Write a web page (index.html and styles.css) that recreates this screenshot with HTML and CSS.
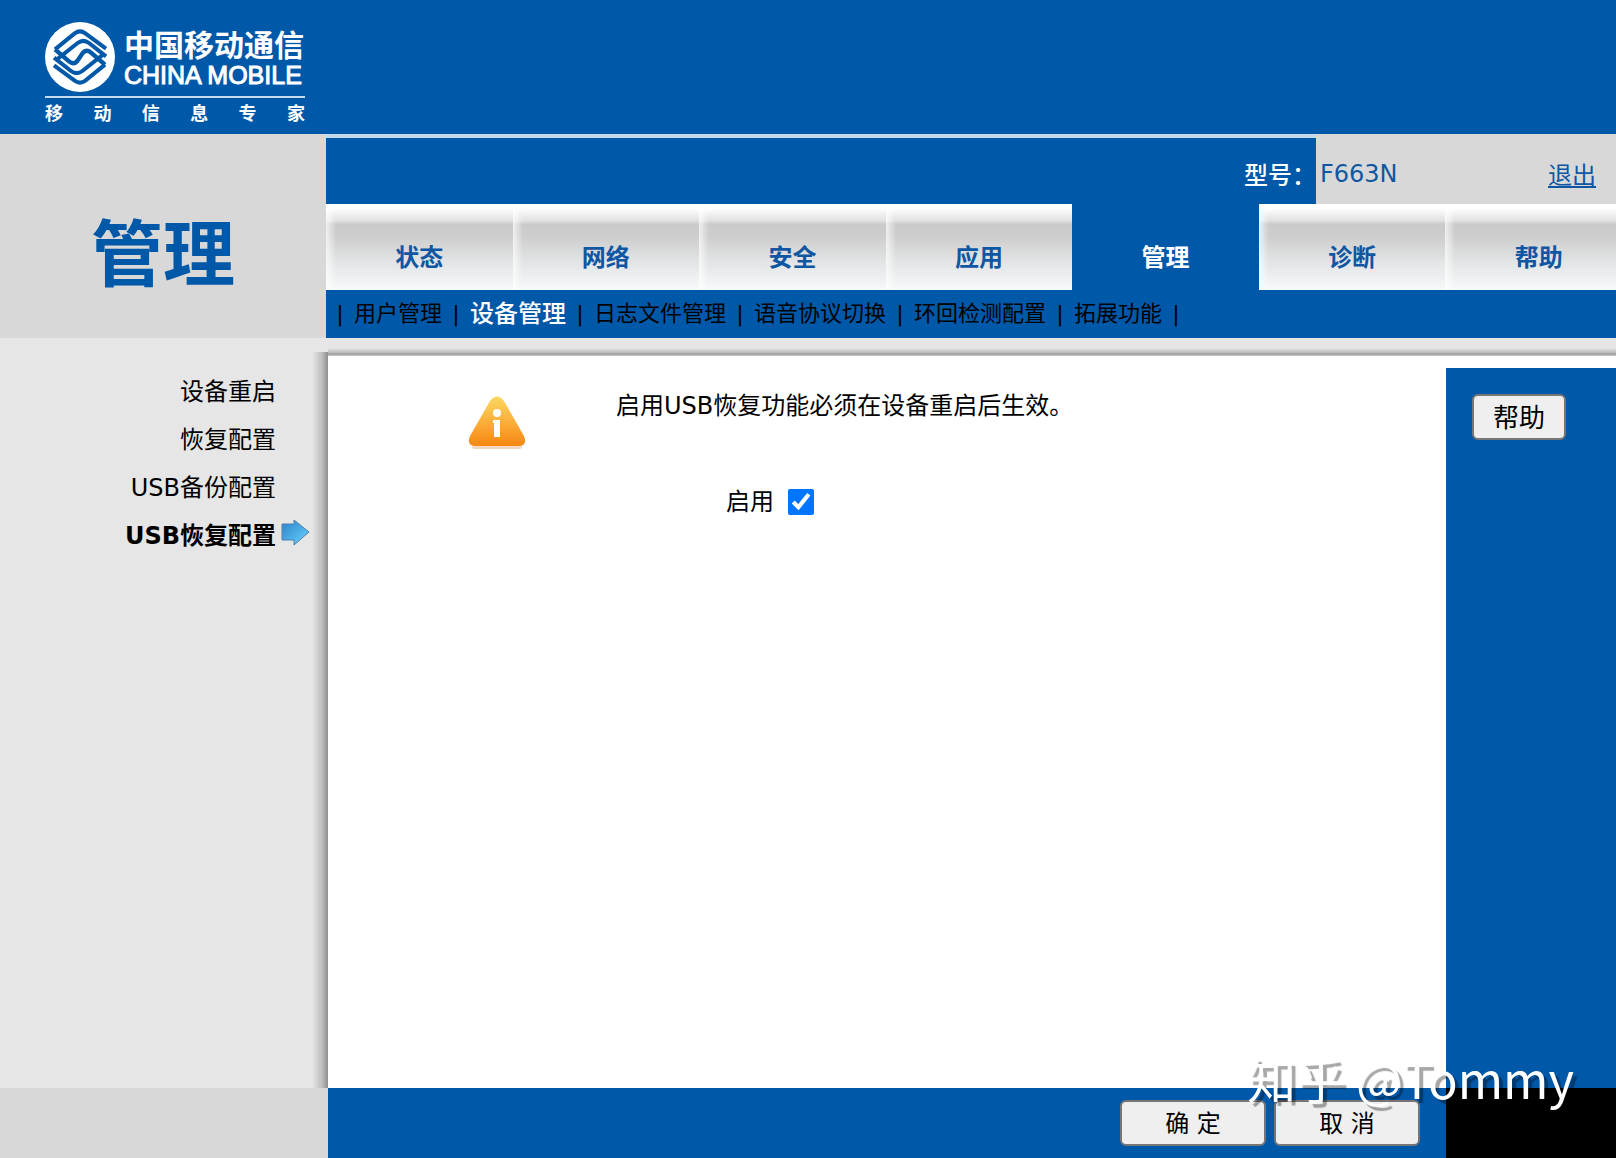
FILE: index.html
```html
<!DOCTYPE html>
<html lang="zh-CN">
<head>
    <meta charset="UTF-8">
    <meta name="viewport" content="width=device-width, initial-scale=1.0">
    <title>F663N</title>
    <link rel="stylesheet" href="styles.css">
</head>
<body>

    <header class="banner">
        <div class="logo">
            <div class="logo-main">
                <svg class="logo-mark" viewBox="0 0 210 210">
                    <circle cx="105" cy="105" r="105" fill="#fff"/>
                    <g fill="none" stroke="#0058a9" stroke-width="12">
                        <path d="M30 82L89 34Q105 22 121 34L183 80"/>
                        <path d="M180 128L121 176Q105 188 89 176L27 130"/>
                        <path d="M183 103L132 63Q115 50 98 63L36 112"/>
                        <path d="M27 107L78 147Q95 160 112 147L174 98"/>
                        <path d="M30 82L72 118Q86 130 97 117L113 93Q124 80 138 92L180 128" stroke-width="13"/>
                    </g>
                </svg>
                <div class="logo-name">
                    <div class="logo-cn">中国移动通信</div>
                    <div class="logo-en">CHINA MOBILE</div>
                </div>
            </div>
            <div class="slogan">
                <span>移</span><span>动</span><span>信</span><span>息</span><span>专</span><span>家</span>
            </div>
        </div>
    </header>

    <div class="top">
        <h1 class="page-title">管理</h1>
        <div class="top-right">
            <div class="device">
                <div class="device-label">型号：</div>
                <div class="device-info">
                    <span>F663N</span>
                    <a href="#">退出</a>
                </div>
            </div>
            <nav class="tabs">
                <a class="tab" href="#">状态</a>
                <a class="tab" href="#">网络</a>
                <a class="tab" href="#">安全</a>
                <a class="tab" href="#">应用</a>
                <a class="tab active" href="#">管理</a>
                <a class="tab" href="#">诊断</a>
                <a class="tab" href="#">帮助</a>
            </nav>
            <nav class="submenu">
                <span>|</span>
                <a href="#">用户管理</a>
                <span>|</span>
                <a class="active" href="#">设备管理</a>
                <span>|</span>
                <a href="#">日志文件管理</a>
                <span>|</span>
                <a href="#">语音协议切换</a>
                <span>|</span>
                <a href="#">环回检测配置</a>
                <span>|</span>
                <a href="#">拓展功能</a>
                <span>|</span>
            </nav>
        </div>
    </div>

    <div class="middle">
        <ul class="sidebar">
            <li><a href="#">设备重启</a></li>
            <li><a href="#">恢复配置</a></li>
            <li><a href="#">USB备份配置</a></li>
            <li class="current">
                <a href="#">USB恢复配置</a>
                <svg class="arrow" viewBox="0 0 29 28">
                    <defs>
                        <linearGradient id="arrowFill" x1="0" y1="0" x2="1" y2="1">
                            <stop offset="0" stop-color="#2f7fc4"/>
                            <stop offset="0.6" stop-color="#4fb4ec"/>
                            <stop offset="1" stop-color="#8ad8f8"/>
                        </linearGradient>
                    </defs>
                    <path d="M1 4H13V0L28 12L13 25V20H1Z" fill="url(#arrowFill)" stroke="#4a80b0"/>
                </svg>
            </li>
        </ul>
        <div class="main">
            <div class="shade"></div>
            <div class="columns">
                <form class="content" id="usbForm">
                    <div class="notice">
                        <svg class="warn" viewBox="0 0 58 56">
                            <defs>
                                <linearGradient id="warnFill" x1="0" y1="0" x2="0" y2="1">
                                    <stop offset="0" stop-color="#fbd860"/>
                                    <stop offset="0.5" stop-color="#fbb03c"/>
                                    <stop offset="1" stop-color="#f68712"/>
                                </linearGradient>
                            </defs>
                            <path d="M6 51H52" stroke="#f0d8c0" stroke-width="4" stroke-linecap="round"/>
                            <path d="M22 5Q29 -4 36 5L56 40Q60 50 50 50H8Q-2 50 2 40Z" fill="url(#warnFill)"/>
                            <circle cx="29" cy="17" r="4" fill="#fff"/>
                            <path d="M25 24H32V41H26V27H25Z" fill="#fff"/>
                        </svg>
                        <p>启用USB恢复功能必须在设备重启后生效。</p>
                    </div>
                    <div class="field">
                        <label for="enable">启用</label>
                        <input type="checkbox" id="enable" checked>
                    </div>
                </form>
                <div class="help">
                    <button type="button">帮助</button>
                </div>
            </div>
        </div>
    </div>

    <footer class="bottom">
        <div class="bottom-left"></div>
        <div class="bottom-bar">
            <button type="submit" form="usbForm">确 定</button>
            <button type="reset" form="usbForm">取 消</button>
        </div>
        <div class="bottom-right"></div>
    </footer>

    <div class="watermark">知乎 @Tommy</div>

</body>
</html>
```
FILE: styles.css
```css
* {
    box-sizing: border-box;
}
body {
    margin: 0;
    min-height: 100vh;
    position: relative;
    display: flex;
    flex-direction: column;
    overflow-x: hidden;
    font-family: "DejaVu Sans", "Noto Sans CJK SC", sans-serif;
    font-size: 24px;
    line-height: 32px;
    color: #000;
    background-color: #fff;
}
a {
    color: inherit;
    text-decoration: none;
}

/* banner */
.banner {
    height: 134px;
    padding: 22px 45px 0;
    background-color: #0058a9;
    color: #fff;
}
.logo {
    width: 260px;
}
.logo-main {
    display: flex;
    gap: 9px;
    height: 74px;
}
.logo-mark {
    width: 70px;
    height: 70px;
}
.logo-name {
    padding-top: 8px;
    white-space: nowrap;
}
.logo-cn {
    font-size: 30px;
    line-height: 32px;
    font-weight: bold;
}
.logo-en {
    font-family: "Liberation Sans", Arial, sans-serif;
    font-size: 25px;
    line-height: 26px;
    -webkit-text-stroke: 1px #fff;
}
.slogan {
    display: flex;
    justify-content: space-between;
    border-top: 2px solid #c4dcf4;
    padding-top: 4px;
    font-size: 18px;
    line-height: 24px;
    font-weight: bold;
}

/* title, tabs and submenu */
.top {
    display: flex;
    background-color: #d8d8d8;
}
.page-title {
    width: 326px;
    flex: none;
    margin: 0;
    padding-top: 76px;
    font-size: 72px;
    line-height: 90px;
    text-align: center;
    color: #0058a9;
}
.top-right {
    flex: 1;
    min-width: 0;
}
.device {
    display: flex;
    height: 70px;
}
.device-label {
    flex: 1;
    padding-top: 22px;
    border-top: 4px solid #c4d8ee;
    background-color: #0058a9;
    color: #fff;
    text-align: right;
    font-weight: 500;
}
.device-info {
    width: 300px;
    display: flex;
    justify-content: space-between;
    padding: 24px 20px 0 4px;
    color: #0f56a3;
}
.device-info a {
    padding-top: 2px;
    text-decoration: underline;
}
.tabs {
    display: grid;
    grid-template-columns: repeat(7, 1fr);
    margin-right: -16px;
    background-color: #0058a9;
}
.tab {
    height: 86px;
    padding-top: 38px;
    text-align: center;
    font-weight: bold;
    color: #0f56a3;
    background: linear-gradient(to right, rgba(255, 255, 255, 0.7), rgba(255, 255, 255, 0) 10px),
        linear-gradient(#fff 4px, #e0e0e0 17px, #cacaca 20px, #cdcdcd 32px, #e2e4e5 58px, #f6fafa);
}
.tab.active {
    background: #0058a9;
    color: #fff;
}
.submenu {
    display: flex;
    gap: 10px;
    height: 48px;
    padding: 8px 10px 0;
    background-color: #0058a9;
    font-size: 22px;
    white-space: nowrap;
}
.submenu span {
    width: 8px;
    text-align: center;
}
.submenu .active {
    font-size: 24px;
    font-weight: 500;
    color: #fff;
}

/* middle part */
.middle {
    flex: 1;
    display: flex;
}
.sidebar {
    width: 328px;
    flex: none;
    margin: 0;
    padding: 30px 18px 0 0;
    list-style: none;
    background: linear-gradient(to left, #8f8f8f, #bdbdbd 6px, #e6e6e6 16px) 0 14px no-repeat #e6e6e6;
}
.sidebar li {
    display: flex;
    justify-content: flex-end;
    height: 48px;
    padding: 8px 34px 0 0;
}
.sidebar .current {
    padding-right: 0;
    gap: 5px;
    font-weight: bold;
}
.arrow {
    width: 29px;
    height: 28px;
}
.main {
    flex: 1;
    display: flex;
    flex-direction: column;
}
.shade {
    height: 18px;
    background: linear-gradient(#e6e6e6 10px, #b8b8b8 15px, #989898 16px, #d0d0d0);
}
.columns {
    flex: 1;
    display: flex;
    padding-top: 12px;
}
.content {
    flex: 1;
    padding: 22px 0 0 140px;
}
.notice {
    display: flex;
    gap: 90px;
    height: 96px;
}
.notice p {
    margin: 0;
}
.warn {
    width: 58px;
    height: 56px;
    margin-top: 6px;
}
.field {
    display: flex;
    align-items: center;
    gap: 14px;
    padding-left: 258px;
}
.field input {
    width: 26px;
    height: 26px;
    margin: 0;
    accent-color: #0075ff;
}
.help {
    width: 170px;
    padding: 26px;
    background-color: #0058a9;
}
button {
    height: 46px;
    padding: 0 0 4px;
    border: 2px solid #767676;
    border-radius: 6px;
    background-color: #efefef;
    color: #000;
    font-family: inherit;
    font-size: 24px;
}
.help button {
    width: 94px;
    font-size: 26px;
}

/* bottom */
.bottom {
    display: flex;
    height: 70px;
    background-color: #0058a9;
}
.bottom-left {
    width: 328px;
    background-color: #d8d8d8;
}
.bottom-bar {
    flex: 1;
    display: flex;
    justify-content: flex-end;
    gap: 8px;
    padding: 12px 26px 0 0;
}
.bottom-bar button {
    width: 146px;
}
.bottom-right {
    width: 170px;
    background-color: #000;
}
.watermark {
    position: absolute;
    right: 42px;
    bottom: 45px;
    font-family: "Noto Sans CJK SC", sans-serif;
    font-size: 49px;
    line-height: 70px;
    color: #fff;
    text-shadow: 4px 4px 1px rgba(0, 0, 0, 0.35);
    pointer-events: none;
}
```
